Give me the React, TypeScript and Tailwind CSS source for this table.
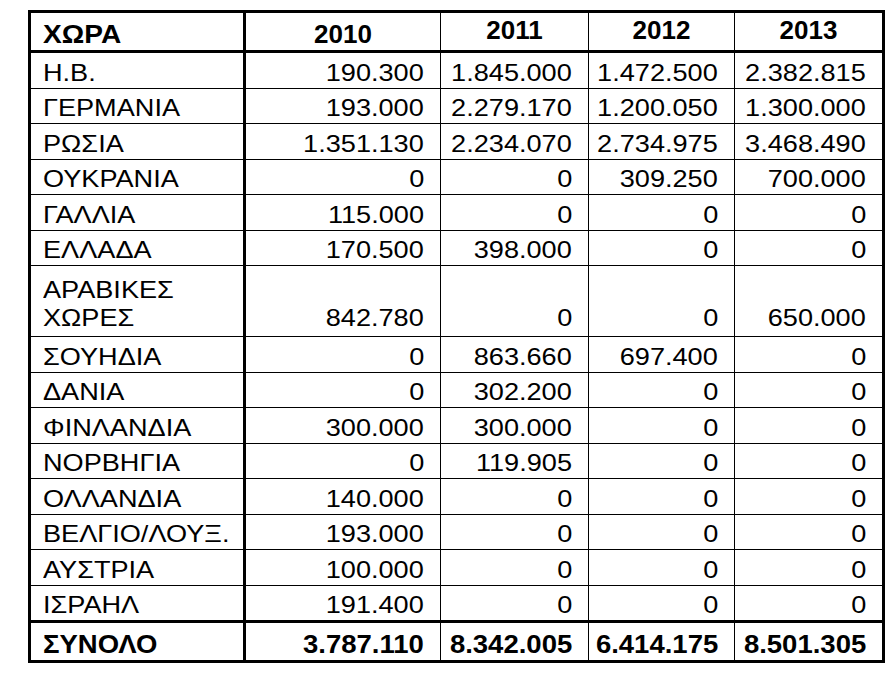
const ROWS: { name: string[]; v: string[] }[] = [
  { name: ['Η.Β.'], v: ['190.300', '1.845.000', '1.472.500', '2.382.815'] },
  { name: ['ΓΕΡΜΑΝΙΑ'], v: ['193.000', '2.279.170', '1.200.050', '1.300.000'] },
  { name: ['ΡΩΣΙΑ'], v: ['1.351.130', '2.234.070', '2.734.975', '3.468.490'] },
  { name: ['ΟΥΚΡΑΝΙΑ'], v: ['0', '0', '309.250', '700.000'] },
  { name: ['ΓΑΛΛΙΑ'], v: ['115.000', '0', '0', '0'] },
  { name: ['ΕΛΛΑΔΑ'], v: ['170.500', '398.000', '0', '0'] },
  { name: ['ΑΡΑΒΙΚΕΣ', 'ΧΩΡΕΣ'], v: ['842.780', '0', '0', '650.000'] },
  { name: ['ΣΟΥΗΔΙΑ'], v: ['0', '863.660', '697.400', '0'] },
  { name: ['ΔΑΝΙΑ'], v: ['0', '302.200', '0', '0'] },
  { name: ['ΦΙΝΛΑΝΔΙΑ'], v: ['300.000', '300.000', '0', '0'] },
  { name: ['ΝΟΡΒΗΓΙΑ'], v: ['0', '119.905', '0', '0'] },
  { name: ['ΟΛΛΑΝΔΙΑ'], v: ['140.000', '0', '0', '0'] },
  { name: ['ΒΕΛΓΙΟ/ΛΟΥΞ.'], v: ['193.000', '0', '0', '0'] },
  { name: ['ΑΥΣΤΡΙΑ'], v: ['100.000', '0', '0', '0'] },
  { name: ['ΙΣΡΑΗΛ'], v: ['191.400', '0', '0', '0'] },
]

const TOTALS = ['3.787.110', '8.342.005', '6.414.175', '8.501.305']
const YEARS = ['2011', '2012', '2013']

// column widths incl. right border
const NUM_COLS = ['w-[195px] border-r', 'w-[148px] border-r', 'w-[146px] border-r', 'w-[147px]']

export default function App() {
  return (
    <div className="min-h-[679px] w-[892px] bg-white pl-[28px] pt-[10px] font-['Liberation_Sans',Arial,sans-serif] text-black">
      <div className="w-[857px] border-[3px] border-black">
        {/* header */}
        <div className="flex h-[40px] border-b-[3px] border-black text-[26px] font-bold leading-[30px]">
          <div className="flex w-[215px] items-end border-r-[3px] border-black pb-[1px] pl-[12px]">
            <span className="inline-block origin-left scale-x-[1.08]">ΧΩΡΑ</span>
          </div>
          <div className="flex w-[195px] items-end justify-center border-r border-black pb-[1px]">2010</div>
          {YEARS.map((y, i) => (
            <div key={y} className={`flex items-end justify-center border-black pb-[5px] ${NUM_COLS[i + 1]}`}>
              {y}
            </div>
          ))}
        </div>

        {/* data rows */}
        {ROWS.map((r, ri) => {
          const last = ri === ROWS.length - 1
          const dbl = r.name.length > 1
          const pad = dbl ? 'pb-[4px]' : 'pb-[2px]'
          return (
            <div
              key={ri}
              className={`flex border-black text-[24px] ${dbl ? 'h-[71px] leading-[28px]' : 'leading-[27px]'} ${
                last ? 'h-[37.5px] border-b-[3px]' : dbl ? 'border-b' : 'h-[35.5px] border-b'
              }`}
            >
              <div className={`flex w-[215px] flex-col justify-end border-r-[3px] border-black pl-[12px] ${pad}`}>
                {r.name.map((n) => (
                  <span key={n} className="block origin-left scale-x-[1.13]">{n}</span>
                ))}
              </div>
              {r.v.map((v, i) => (
                <div key={i} className={`flex items-end justify-end border-black pr-[16px] ${pad} ${NUM_COLS[i]}`}>
                  <span className="inline-block origin-right scale-x-[1.13]">{v}</span>
                </div>
              ))}
            </div>
          )
        })}

        {/* total */}
        <div className="flex h-[37px] text-[25px] font-bold leading-[28px]">
          <div className="flex w-[215px] items-end border-r-[3px] border-black pb-[2px] pl-[12px]">
            <span className="inline-block origin-left scale-x-[1.1]">ΣΥΝΟΛΟ</span>
          </div>
          {TOTALS.map((v, i) => (
            <div key={i} className={`flex items-end justify-end border-black pb-[2px] pr-[16px] ${NUM_COLS[i]}`}>
              <span className="inline-block origin-right scale-x-[1.1]">{v}</span>
            </div>
          ))}
        </div>
      </div>
    </div>
  )
}
